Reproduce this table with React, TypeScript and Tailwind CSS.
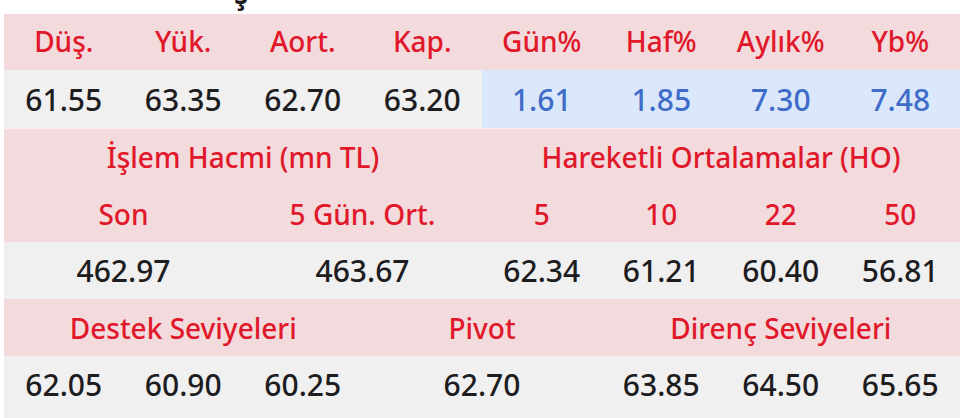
const PINK = "bg-[#f2dadd]";
const GRAY = "bg-[#f0f0f0]";

const head = "flex items-center justify-center text-[#e0182a] text-[28px] font-medium";
const val = "flex items-center justify-center text-[#1d1d1f] text-[30px] font-medium";

function Cell({ children, className = "" }: { children: React.ReactNode; className?: string }) {
  return <div className={className}>{children}</div>;
}

export default function App() {
  return (
    <div
      className="w-[960px] h-[418px] overflow-hidden bg-white"
      style={{ fontFamily: '"Noto Sans", "Open Sans", sans-serif' }}
    >
      {/* title cut off above, only the cedilla shows */}
      <div className="h-[14px] overflow-hidden">
        <div className="-mt-[27px] pl-[234px] text-[28px] font-bold leading-[40px] text-[#1d1d1f]">ş</div>
      </div>

      <div className="ml-1 w-[956px] grid grid-cols-8">
        {/* row 1 */}
        {["Düş.", "Yük.", "Aort.", "Kap.", "Gün%", "Haf%", "Aylık%", "Yb%"].map((h) => (
          <Cell key={h} className={`${head} ${PINK} h-[56px] pb-[2px]`}>{h}</Cell>
        ))}
        {["61.55", "63.35", "62.70", "63.20"].map((v) => (
          <Cell key={v} className={`${val} ${GRAY} h-[58px]`}>{v}</Cell>
        ))}
        {["1.61", "1.85", "7.30", "7.48"].map((v) => (
          <Cell key={v} className={`${val} bg-[#dbe7fb] text-[#3e6cc8] h-[58px]`}>{v}</Cell>
        ))}

        {/* volume & moving averages */}
        <Cell className={`${head} ${PINK} col-span-4 h-[57px] border-t border-white/60`}>İşlem Hacmi (mn TL)</Cell>
        <Cell className={`${head} ${PINK} col-span-4 h-[57px] border-t border-white/60`}>Hareketli Ortalamalar (HO)</Cell>
        <Cell className={`${head} ${PINK} col-span-2 h-[57px]`}>Son</Cell>
        <Cell className={`${head} ${PINK} col-span-2 h-[57px]`}>5 Gün. Ort.</Cell>
        {["5", "10", "22", "50"].map((h) => (
          <Cell key={h} className={`${head} ${PINK} h-[57px]`}>{h}</Cell>
        ))}
        <Cell className={`${val} ${GRAY} col-span-2 h-[57px]`}>462.97</Cell>
        <Cell className={`${val} ${GRAY} col-span-2 h-[57px]`}>463.67</Cell>
        {["62.34", "61.21", "60.40", "56.81"].map((v) => (
          <Cell key={v} className={`${val} ${GRAY} h-[57px]`}>{v}</Cell>
        ))}

        {/* support / pivot / resistance */}
        <Cell className={`${head} ${PINK} col-span-3 h-[57px]`}>Destek Seviyeleri</Cell>
        <Cell className={`${head} ${PINK} col-span-2 h-[57px]`}>Pivot</Cell>
        <Cell className={`${head} ${PINK} col-span-3 h-[57px]`}>Direnç Seviyeleri</Cell>
        {["62.05", "60.90", "60.25"].map((v) => (
          <Cell key={v} className={`${val} ${GRAY} h-[62px] pb-[6px]`}>{v}</Cell>
        ))}
        <Cell className={`${val} ${GRAY} col-span-2 h-[62px] pb-[6px]`}>62.70</Cell>
        {["63.85", "64.50", "65.65"].map((v) => (
          <Cell key={v} className={`${val} ${GRAY} h-[62px] pb-[6px]`}>{v}</Cell>
        ))}
      </div>
    </div>
  );
}
